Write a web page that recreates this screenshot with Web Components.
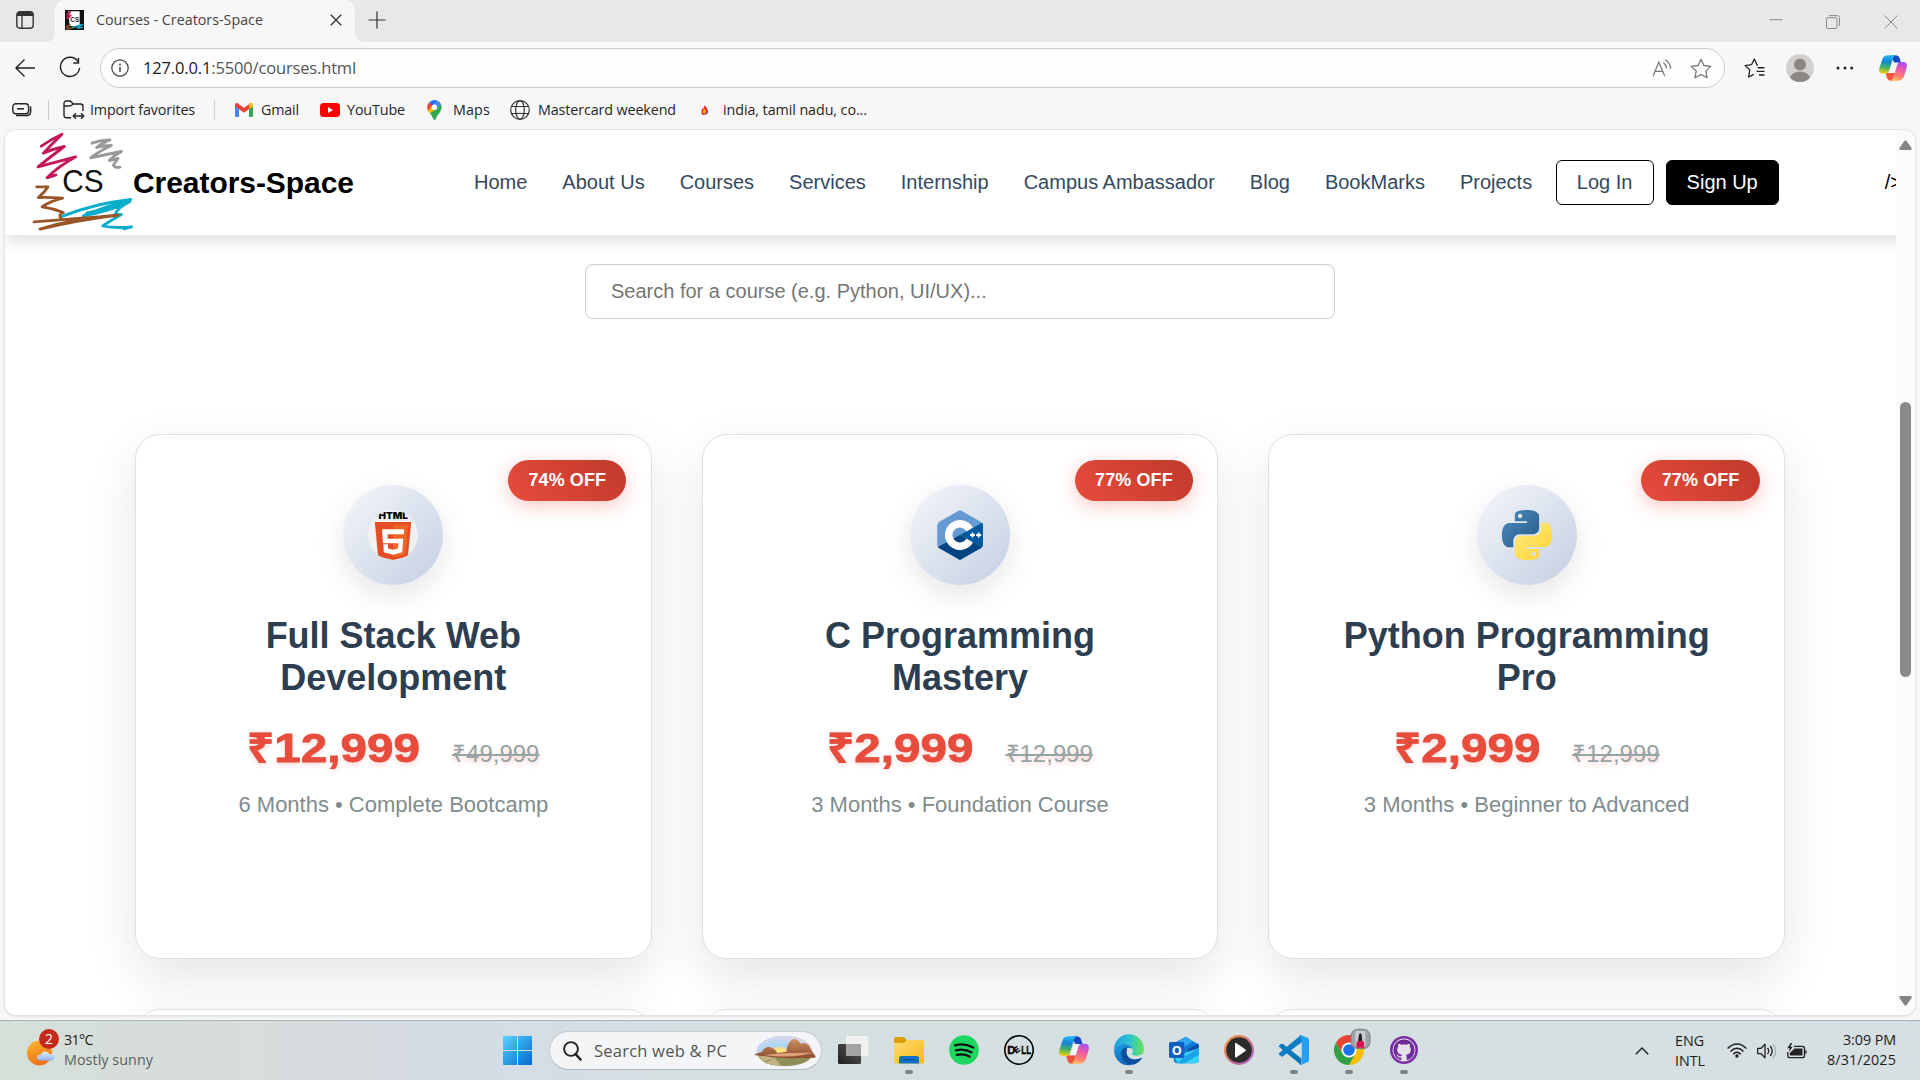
<!DOCTYPE html>
<html lang="en">
<head>
<meta charset="utf-8">
<title>Courses - Creators-Space</title>
<style>
html,body{margin:0;width:1920px;height:1080px;overflow:hidden;background:#f7f7f7}
body{font-family:"Open Sans","Noto Sans",sans-serif}
</style>
</head>
<body>
<desktop-screen></desktop-screen>
<script>
const ICONS = {
tabs:[18,18,'0 0 18 18','<rect x=".8" y=".8" width="16.4" height="16.4" rx="3" fill="none" stroke="#333" stroke-width="1.4"/><path d="M1 5V3.500Q1 1 3.500 1h11Q17 1 17 3.500V5z" fill="#333"/><path d="M6 5v12" stroke="#333" stroke-width="1.3"/>'],
close:[12,12,'0 0 12 12','<path d="M.8.8l10.400 10.400M11.200.8L.8 11.200" stroke="#333" stroke-width="1.300"/>'],
plus:[18,18,'0 0 18 18','<path d="M9 .5v17M.5 9h17" stroke="#333" stroke-width="1.200"/>'],
back:[20,18,'0 0 20 18','<path d="M20 9H1M9.500.6L1 9l8.500 8.400" fill="none" stroke="#222" stroke-width="1.400"/>'],
reload:[22,22,'0 0 22 22','<path d="M19 4.500A9.600 9.600 0 1 0 20.600 11M19.500.8v5.200h-5.300" fill="none" stroke="#222" stroke-width="1.400"/>'],
info:[18,18,'0 0 18 18','<circle cx="9" cy="9" r="8.200" fill="none" stroke="#444" stroke-width="1.200"/><path d="M9 8v5" stroke="#444" stroke-width="1.500"/><circle cx="9" cy="5.500" r="1" fill="#444"/>'],
min:[14,2,'0 0 14 2','<path d="M.5 .7h13" stroke="#8a8a8a"/>'],
max:[14,14,'0 0 14 14','<rect x=".5" y="2.700" width="10.500" height="10.800" rx="1" fill="none" stroke="#8a8a8a"/><path d="M3 .6h8.500q2 0 2 2V11" fill="none" stroke="#8a8a8a"/>'],
wclose:[14,14,'0 0 14 14','<path d="M.5.5l13 13M13.500.5l-13 13" stroke="#8a8a8a"/>'],
read:[20,18,'0 0 20 18','<path d="M1 17.300L6.800 3l6 14.300M3 12.300h7.800" fill="none" stroke="#777" stroke-width="1.200"/><path d="M11.500 3.700q2.800 2 3 5.500M13 .8q5.400 3.200 5.600 8.900" fill="none" stroke="#777" stroke-width="1.300"/>'],
star:[22,21,'0 0 22 21','<path d="M11 1.300l2.900 6.200 6.900.9-5 4.700 1.300 6.700L11 16.500l-6.100 3.300 1.300-6.700-5-4.700 6.900-.9z" fill="none" stroke="#777" stroke-width="1.300" stroke-linejoin="round"/>'],
favs:[22,21,'0 0 22 21','<path d="M14 7.200l-1-.2L10.300 1 7.500 6.700l-6.400.9 4.700 4.400-1.200 7 5.200-2.700" fill="none" stroke="#222" stroke-width="1.300" stroke-linejoin="round"/><path d="M13.500 9.800h7M12.500 13.400h8M15 17h5.500" stroke="#222" stroke-width="1.400"/>'],
user:[28,28,'0 0 28 28','<circle cx="14" cy="14" r="14" fill="#d3d1cf"/><circle cx="14" cy="10.600" r="6" fill="#8b8783"/><path d="M3.900 23.500Q6.500 17.500 14 17.500t10.100 6Q20 28 14 28T3.900 23.500z" fill="#8b8783"/>'],
more:[18,4,'0 0 18 4','<circle cx="2" cy="2" r="1.500" fill="#222"/><circle cx="9" cy="2" r="1.500" fill="#222"/><circle cx="15.700" cy="2" r="1.500" fill="#222"/>'],
copilot:[30,28,'0 0 90 84','<defs><linearGradient id="a" x1=".5" y1="0" x2=".4" y2="1"><stop offset="0" stop-color="#22b8f0"/><stop offset=".35" stop-color="#1585d8"/><stop offset=".65" stop-color="#3fb06a"/><stop offset="1" stop-color="#f2d010"/></linearGradient><linearGradient id="b" x1=".7" y1="0" x2=".4" y2="1"><stop offset="0" stop-color="#a54ff0"/><stop offset=".4" stop-color="#ee5aa8"/><stop offset=".75" stop-color="#fb7f72"/><stop offset="1" stop-color="#ffbb66"/></linearGradient></defs><path d="M42 1h11q10 0 14 11l4 13H50l-8-12z" fill="#1547c4"/><path d="M21 58h30L46 83h-8Q28 83 25 72z" fill="#f0553c"/><path d="M27 1h28Q47 2 43 17L33 50Q30 60 21 60H12Q-3 59 1 43L10 15Q14 2 27 1z" fill="url(#a)"/><path d="M63 83H36Q45 79 48 67l10-34q3-10 12-10h8q15 1 11 18L81 68Q76 82 63 83z" fill="url(#b)"/><path d="M46 25h17q-5 2-7 10l-7 23H32z" fill="#f4f4f4"/>'],
side:[20,14,'0 0 20 14','<rect x=".8" y=".8" width="15.800" height="10" rx="3" fill="none" stroke="#222" stroke-width="1.400"/><path d="M5 5.800h7" stroke="#222" stroke-width="1.500"/><path d="M18.600 3.500v5q0 4-4 4H4" fill="none" stroke="#222" stroke-width="1.500"/>'],
folder:[22,20,'0 0 22 20','<path d="M8 17.800H3.500Q1 17.800 1 15.300V3.500Q1 1 3.500 1h3.800l3 3h7.200Q20 4 20 6.500V11M1 6h5.500q1 0 2-.8L10.300 4" fill="none" stroke="#222" stroke-width="1.400"/><path d="M10.500 16h10M13 13.200L10.200 16l2.800 2.800M18 13.200l2.800 2.800-2.800 2.800" fill="none" stroke="#222" stroke-width="1.300"/>'],
gmail:[18,14,'0 0 18 14','<path d="M0 2v10.500Q0 14 1.300 14H4V4z" fill="#4285f4"/><path d="M18 2v10.500Q18 14 16.700 14H14V4z" fill="#34a853"/><path d="M14 .8V6l4-2.800V2q0-2.800-2.800-1.800z" fill="#fbbc04"/><path d="M0 2q0-3 2.800-1.700L9 5l6.200-4.700L14 6 9 9.800 4 6 0 3.200z" fill="#ea4335"/><path d="M14 1.200L15.200.3Q18-.7 18 2v1.200L14 6z" fill="#fbbc04"/>'],
yt:[20,14,'0 0 20 14','<rect width="20" height="14" rx="3.500" fill="#f00"/><path d="M8 4l5 3-5 3z" fill="#fff"/>'],
maps:[15,20,'0 0 15 20','<path d="M7.500 0A7.200 7.200 0 0 0 2 2.500l3 3.300L10.300.8Q9 0 7.500 0z" fill="#1a73e8"/><path d="M2 2.500Q.3 4.500.3 7.500q0 2 .7 3.600L6 5.500z" fill="#ea4335"/><path d="M10 .6Q13 1.600 14.200 4.500L6 14 2.500 13Q1.500 12 1 11.100z" fill="#fbbc04"/><path d="M9.500.4Q13 1.500 14.200 4.500L9.500 9.500 5 5.800z" fill="#4285f4"/><path d="M14.200 4.500q1.300 4-1.200 7.400Q9.500 16 8.600 19.200q-.4.800-1.100.8t-1.100-.8Q5.600 16.500 3 13.500z" fill="#34a853"/><circle cx="7.500" cy="7.300" r="2.700" fill="#fff"/>'],
globe:[20,20,'0 0 20 20','<g fill="none" stroke="#333" stroke-width="1.200"><circle cx="10" cy="10" r="9.300"/><ellipse cx="10" cy="10" rx="4.300" ry="9.300"/><path d="M1.500 6.500h17M1.500 13.500h17"/></g>'],
flame:[7,10,'0 0 8 11','<path d="M4 0q4 4 4 7T4 11 .5 7Q.6 4.500 2 3q.3 1 1 1.500Q3 2 4 0z" fill="#ee2c3c"/><path d="M4 4q2 2.500 1.500 4T3.700 9.500Q1 8 2.500 6z" fill="#ffb300"/><path d="M7 6q1.500 2.500-.5 4.200L4.500 11z" fill="#7a3cb0"/>'],
logo:[100,100,'99 399.500 300 300','<g fill="none" stroke-width="8.500" stroke-linecap="round" stroke-linejoin="round"><path stroke="#c2185b" d="M124 439Q155 417 186 403 Q158 430 130 460 Q160 447 193 440 Q150 472 114 501 Q170 486 227 471 Q175 500 141 534 L168 525"/><path stroke="#999" d="M276 430Q304 420 330 420Q304 430 290 443Q312 437 334 437Q296 455 272 474Q318 464 364 455Q338 470 328 482L354 476Q344 490 340 496Q346 505 360 502"/><path stroke="#9a5526" d="M110 561H144Q134 578 115 593Q148 592 188 595Q155 602 126 621Q158 625 190 638Q172 646 184 655"/><path stroke="#09aecb" d="M188 649Q280 612 392 599Q320 618 250 648Q330 634 390 605Q350 625 345 645L364 644Q330 664 308 678Q345 686 395 681L372 687M260 640Q330 622 385 606"/><path stroke="#9a5526" d="M102 666Q240 656 354 646Q230 662 120 688Q220 656 350 647"/></g><text x="187" y="577" font-family="Liberation Sans" font-size="94" textLength="124" lengthAdjust="spacingAndGlyphs" fill="#111">CS</text>'],
fav:[19,20,'0 0 57 60','<rect width="57" height="60" fill="#111"/><path d="M10 4l34 0v44H14z" fill="#fff"/><path d="M4 14L17 4 7 22l12-7-11 12" stroke="#c2185b" stroke-width="4" fill="none"/><path d="M2 52l14-8-10 14 30-8" stroke="#8d4f28" stroke-width="4" fill="none"/><path d="M20 52l34-9-18 11 18-1" stroke="#09aecb" stroke-width="4" fill="none"/><text x="16" y="35" font-size="19" font-weight="700" font-family="Liberation Sans" fill="#222">CS</text>'],
html:[50,50,'0 0 50 50','<circle cx="25" cy="25" r="25" fill="#f1f1f1"/><text x="10.500" y="8.800" font-family="Inter" font-weight="900" font-size="9.500" textLength="29.500" lengthAdjust="spacingAndGlyphs" fill="#000">HTML</text><path d="M6.800 12h36.400l-3.300 34.500L25 50l-14.900-3.500z" fill="#e44d26"/><path d="M25 14.800h15.200l-2.900 29.400L25 47.300z" fill="#f16529"/><path d="M14 19.200h22.200l-.5 5H19.500l.3 4.500h15.500l-1.100 13.500L25 44.800l-9.200-2.600-.5-8h4.500l.3 4.200 4.900 1.400 4.900-1.400.5-5.200H15z" fill="#fff"/>'],
cpp:[50,50,'0 0 50 50','<path d="M25 0l20.600 11.700q2.400 1.300 2.400 4v18.600q0 2.700-2.400 4L25 50 4.400 38.300q-2.200-1.300-2.200-4V15.700q0-2.700 2.200-4z" fill="#659ad2"/><path d="M47.300 12.800Q48 14 48 15.700v18.600q0 1.500-.8 2.700L25 25z" fill="#00599c"/><path d="M25 25l22.200 12q-.6.800-1.600 1.300L25 50 4.400 38.300Q3.400 37.700 2.900 37z" fill="#004482"/><path d="M38 17.600A15 15 0 1 0 38 32.400L31.500 28.600a7.500 7.500 0 1 1 0-7.200z" fill="#fff"/><path d="M37.500 22.500v5M35 25h5M43.700 22.500v5M41.200 25h5" stroke="#fff" stroke-width="1.800"/>'],
python:[50,50,'0 0 24 24','<defs><linearGradient id="p" x1="0" y1="0" x2=".8" y2=".8"><stop stop-color="#4b8bbe"/><stop offset="1" stop-color="#2f6391"/></linearGradient><linearGradient id="q" x1=".8" y1=".8" x2="0" y2="0"><stop stop-color="#ffe873"/><stop offset="1" stop-color="#ffd030"/></linearGradient></defs>'+['fill="url(#p)"','transform="rotate(180 12 12)" fill="url(#q)"'].map(a=>'<path '+a+' d="M14.250.18l.9.2.73.26.59.3.45.32.34.34.25.34.16.33.1.3.04.26.02.2-.01.13V8.500l-.05.63-.13.55-.21.46-.26.38-.3.31-.33.25-.35.19-.35.14-.33.1-.3.07-.26.04-.21.02H8.770l-.69.05-.59.14-.5.22-.41.27-.33.32-.27.35-.2.36-.15.37-.1.35-.07.32-.04.27-.02.21v3.060H3.170l-.21-.03-.28-.07-.32-.12-.35-.18-.36-.26-.36-.36-.35-.46-.32-.59-.28-.73-.21-.88-.14-1.050-.05-1.230.06-1.220.16-1.040.24-.87.32-.71.36-.57.4-.44.42-.33.42-.24.4-.16.36-.1.32-.05.24-.01h.16l.06.01h8.160v-.83H6.180l-.01-2.750-.02-.37.05-.34.11-.31.17-.28.25-.26.31-.23.38-.2.44-.18.51-.15.58-.12.64-.1.71-.06.77-.04.84-.02 1.270.05zm-6.300 1.980l-.23.33-.08.41.08.41.23.34.33.22.41.09.41-.09.33-.22.23-.34.08-.41-.08-.41-.23-.33-.33-.22-.41-.09-.41.09z"/>').join('')],
sun:[29,34,'0 0 29 34','<defs><linearGradient id="w" x1=".2" y1="0" x2=".6" y2="1"><stop stop-color="#f9b52b"/><stop offset="1" stop-color="#ef6c1a"/></linearGradient><linearGradient id="cl" x1="0" y1="0" x2="0" y2="1"><stop stop-color="#e6effc"/><stop offset="1" stop-color="#8db2ea"/></linearGradient></defs><circle cx="12.500" cy="21" r="12.500" fill="url(#w)"/><path d="M14 28.500q-4 0-4-3t4-3q1-3 4-3t4.500 2.500q5.200-.5 5.200 3t-4 3.500z" fill="url(#cl)"/>'],
win:[29,29,'0 0 29 29','<defs><linearGradient id="n" x1="0" y1="0" x2="1" y2="1"><stop stop-color="#5ad4fc"/><stop offset="1" stop-color="#0067d0"/></linearGradient></defs><path d="M0 1q0-1 1-1h13v14H0zM15 0h13q1 0 1 1v13H15zM0 15h14v14H1q-1 0-1-1zM15 15h14v13q0 1-1 1H15z" fill="url(#n)"/>'],
mag:[19,20,'0 0 19 20','<circle cx="8" cy="8" r="6.900" fill="none" stroke="#222" stroke-width="1.900"/><path d="M12.500 13l5 5.500" stroke="#222" stroke-width="2.600" stroke-linecap="round"/>'],
scene:[62,32,'0 0 186 96','<defs><radialGradient id="sky" cx=".4" cy=".55" r=".55"><stop stop-color="#fff07a"/><stop offset=".25" stop-color="#ffdc80"/><stop offset=".4" stop-color="#a5d8f4"/><stop offset="1" stop-color="#ddd5ec"/></radialGradient><linearGradient id="mt" x1="0" y1="0" x2="0" y2="1"><stop stop-color="#cf9060"/><stop offset="1" stop-color="#8c4b30"/></linearGradient></defs><ellipse cx="92" cy="48" rx="84" ry="46" fill="url(#sky)"/><path d="M12 64h162q-18 29-82 29T12 64z" fill="#8f8e57"/><path d="M0 60q10-8 24-9 6-15 22-15 16 3 24 18l27-4q4-34 23-38 14 2 20 14 20-7 28 12l12 20q6 4 4 10l-84 2Q50 67 0 60z" fill="url(#mt)"/><path d="M30 60q60-8 148-7l-36 8q-50 8-112-1z" fill="#dda279"/><path d="M30 64l32 4-34 13-14-17zM62 68l20 25-50-8z" fill="#c3b183"/>'],
task:[31,30,'0 0 31 30','<defs><linearGradient id="t" x1="0" y1="1" x2="1" y2="0"><stop stop-color="#222"/><stop offset="1" stop-color="#555"/></linearGradient></defs><rect y="9" width="23" height="20" rx="1.500" fill="url(#t)"/><rect x="8" y="1" width="22.500" height="20" rx="1.500" fill="#f3f3f3" opacity=".9"/><path d="M8 9h15v12H9.500Q8 21 8 19.500z" fill="#a3a3a3"/>'],
files:[30,27,'0 0 30 27','<defs><linearGradient id="f" x1="0" y1="0" x2="1" y2="1"><stop stop-color="#ffdc6e"/><stop offset="1" stop-color="#f8b71c"/></linearGradient></defs><path d="M0 1.500Q0 0 1.500 0H10l3 3.500V8H0z" fill="#dd9f0b"/><path d="M0 6h10l3-3h15.500Q30 3 30 4.500v21Q30 26.500 29 26.500H1q-1 0-1-1z" fill="url(#f)"/><path d="M5 26.500v-5Q5 19 7.500 19h15q2.500 0 2.500 2.500v5z" fill="#0c72c8"/><path d="M9 22.700h12" stroke="#064b8f"/>'],
spotify:[30,30,'0 0 30 30','<circle cx="15" cy="15" r="14.800" fill="#1ed760"/><path d="M6 10.300q9-2.600 18.300 2.200M7 15.300q8-2.200 15.500 2M7.800 19.900q6.700-1.700 12.800 1.700" fill="none" stroke="#111" stroke-width="2.300" stroke-linecap="round"/>'],
dell:[30,30,'0 0 30 30','<circle cx="15" cy="15" r="14.200" fill="none" stroke="#000" stroke-width="1.600"/><g font-family="Liberation Sans" font-weight="700" stroke="#000" stroke-width=".3"><text x="3.300" y="18.700" font-size="10.500" textLength="8" lengthAdjust="spacingAndGlyphs">D</text><text transform="translate(12.200 18.800) rotate(-38)" font-size="8.500">E</text><text x="17.300" y="18.700" font-size="10.500" textLength="10" lengthAdjust="spacingAndGlyphs">LL</text></g>'],
edge:[30,30,'0 0 90 90','<defs><linearGradient id="e1" x1="0" y1=".5" x2="1" y2=".5"><stop stop-color="#1b9de2"/><stop offset=".5" stop-color="#2bc3d2"/><stop offset="1" stop-color="#6be355"/></linearGradient><linearGradient id="e2" x1="0" y1="0" x2=".6" y2="1"><stop stop-color="#1ba0e2"/><stop offset="1" stop-color="#1363b8"/></linearGradient></defs><path d="M0 44A45 45 0 0 1 90 42q0 20-20 20-17 0-17-6 4-4 3-11Q52 26 30 26 8 28 0 44z" fill="url(#e1)"/><path d="M0 46Q6 28 30 26q20 1 25 15-18-8-28 6Q16 75 55 89 20 97 4 65 0 56 0 46z" fill="url(#e2)"/><path d="M37 36q-18 6-15 25 6 28 36 28 16-4 26-19-1-3-6-0-20 7-33-4-10-10-5-22z" fill="#0d4f9e"/><path d="M38 48q2-9 10-8 8 3 8 9-1 5-3 8 1 6 17 6 8 0 13-4l2 6-7 5q-20 6-32-2-9-8-8-20z" fill="#d7e0e1"/>'],
outlook:[30,28,'0 0 90 84','<path d="M14 22L50 2l40 24v44q0 12-12 12H26q-12 0-12-12z" fill="#1278cf"/><path d="M14 23L50 4l22 12-40 26z" fill="#31a6f0"/><path d="M58 40l30-18v14L48 62z" fill="#0a4aa8"/><path d="M14 60l34-10 42-14v34q0 12-12 12H26z" fill="#38d2f5"/><path d="M48 60L90 36v20L46 82H26z" fill="#1aa4ea"/><rect y="18" width="46" height="48" rx="5" fill="#0f5fc4"/><text x="8" y="56" font-family="Open Sans" font-weight="700" font-size="38" fill="#fff">O</text>'],
media:[30,30,'0 0 30 30','<defs><linearGradient id="m" x1="0" y1="0" x2="1" y2="1"><stop stop-color="#ff9a32"/><stop offset=".45" stop-color="#d97a78"/><stop offset="1" stop-color="#a65ae0"/></linearGradient></defs><circle cx="15" cy="15" r="15" fill="url(#m)"/><circle cx="15" cy="15" r="12.800" fill="#2b2b2b"/><path d="M11 8.500v13.400q.3 1 1.200.5l9.300-6.400q.8-.8 0-1.500L12.200 8q-1-.5-1.200.5z" fill="#fff"/>'],
vscode:[30,30,'0 0 90 90','<path d="M0 32l6-5q3-2 6 0l56 44-2 19L0 35z" fill="#0b77b8"/><path d="M0 58l6 6q3 2 6 0L70 20 66 0 0 55z" fill="#0e7ec4"/><path d="M66 0l21 9q3 2 3 5v62q0 4-3 5l-21 9q-3 1-6-2 8 2 8-5V8q0-7-8-5 3-4 6-3z" fill="#26a0f2"/><path d="M67 26v39L42 45z" fill="#d8e1e2"/>'],
chrome:[38,36,'0 0 114 108','<g transform="translate(0 18)"><path d="M6 22.500A45 45 0 0 1 84 22.500H45A22.500 22.500 0 0 0 25.500 56.250z" fill="#ea4335"/><path d="M84 22.500A45 45 0 0 1 45 90L64.500 56.250A22.500 22.500 0 0 0 45 22.500z" fill="#fbbc04"/><path d="M45 90A45 45 0 0 1 6 22.500L25.500 56.250A22.500 22.500 0 0 0 64.500 56.250z" fill="#34a046"/><circle cx="45" cy="45" r="22" fill="#fff"/><circle cx="45" cy="45" r="17.500" fill="#1a73e8"/></g><rect x="51" y="1" width="57" height="58" rx="20" fill="#9da3a5" stroke="#777e80" stroke-width="3"/><rect x="64" y="6" width="30" height="46" fill="#c5ced0"/><path d="M75 17q3-8 8 0l2 20H72z" fill="#222"/><path d="M68 38q10-6 22 0l1 18H67z" fill="#d4144c"/>'],
github:[28,28,'0 0 28 28','<circle cx="14" cy="14" r="14" fill="#7b2fa6"/><circle cx="14" cy="14" r="11.400" fill="#e6e2ec"/><path transform="translate(3.400 3.400) scale(1.325)" fill="#6d2c98" d="M8 0C3.580 0 0 3.580 0 8c0 3.540 2.290 6.530 5.470 7.590.4.07.55-.17.55-.38 0-.19-.01-.82-.01-1.490-2.010.37-2.530-.49-2.690-.94-.09-.23-.48-.94-.82-1.130-.28-.15-.68-.52-.01-.53.63-.01 1.080.58 1.230.82.72 1.210 1.870.87 2.330.66.07-.52.28-.87.51-1.070-1.780-.2-3.640-.89-3.640-3.950 0-.87.31-1.590.82-2.150-.08-.2-.36-1.020.08-2.120 0 0 .67-.21 2.200.82.64-.18 1.320-.27 2-.27s1.360.09 2 .27c1.530-1.040 2.200-.82 2.200-.82.44 1.100.16 1.920.08 2.120.51.56.82 1.270.82 2.150 0 3.070-1.870 3.750-3.650 3.950.29.25.54.73.54 1.480v2.200c0 .21.15.46.55.38A8 8 0 0 0 16 8c0-4.420-3.580-8-8-8z"/>'],
chev:[14,8,'0 0 14 8','<path d="M.8 7.200L7 1l6.200 6.200" fill="none" stroke="#222" stroke-width="1.500"/>'],
wifi:[20,15,'0 0 20 15','<g fill="none" stroke="#222" stroke-width="1.400"><path d="M.6 5.600Q5 1 10 1t9.400 4.600M3.500 8.500Q6.500 5.300 10 5.300t6.500 3.200M6.300 11.200Q8 9.300 10 9.300t3.700 1.900"/></g><circle cx="10" cy="13" r="1.700" fill="#222"/>'],
vol:[20,16,'0 0 20 16','<path d="M.7 5.300H4L8 1.200v13.600L4 10.700H.7z" fill="none" stroke="#222" stroke-width="1.300" stroke-linejoin="round"/><path d="M10.500 5q2.400 3 0 6M13.200 3q4 5 0 10" fill="none" stroke="#222" stroke-width="1.300"/><path d="M16 1q5.500 7 0 14" fill="none" stroke="#9aa" stroke-width="1.200"/>'],
bat:[20,16,'0 0 20 16','<path d="M7 3.300h8.300q2.200 0 2.200 2.200v7q0 2.200-2.200 2.200H3Q.8 14.700.8 12.500V9" fill="none" stroke="#222" stroke-width="1.300"/><path d="M7.500 5.500h7.300q.7 0 .7.700v5.600q0 .7-.7.700H3.500q-.7 0-.7-.7V10z" fill="#222"/><path d="M18.300 7v4q1.500-.3 1.500-2t-1.500-2z" fill="#222"/><path d="M3.600 0L.3 5.200h2.500L1.800 9l4-5.300H3.300L5.300 0z" fill="#222"/>'],
up:[13,10,'0 0 13 10','<path d="M5.600.8q.9-1 1.800 0L12.600 8q.5 1.800-1 2H1.400Q-.2 9.800.4 8z" fill="#858585"/>'],
down:[13,10,'0 0 13 10','<path d="M5.600 9.200q.9 1 1.800 0L12.600 2q.5-1.800-1-2H1.400Q-.2.2.4 2z" fill="#858585"/>']
};

class BaseEl extends HTMLElement{
  connectedCallback(){
    if(this.shadowRoot) return;
    const r=this.attachShadow({mode:'open'});
    r.innerHTML='<style>*{box-sizing:border-box}'+this.css()+'</style>'+this.html();
    this.ready&&this.ready(r);
  }
}

/* Inline vector icon, picked by name */
customElements.define('ui-icon',class extends BaseEl{
  css(){return ':host{display:block;flex:none}svg{display:block;overflow:visible}'}
  html(){const [w,h,v,b]=ICONS[this.getAttribute('name')];return `<svg width="${w}" height="${h}" viewBox="${v}">${b}</svg>`}
});

/* Single-line label spaced so that it fills the width given in "w" */
customElements.define('fit-text',class extends BaseEl{
  css(){return ':host{display:block;flex:none;white-space:nowrap;width:max-content}'}
  html(){return '<slot></slot>'}
  ready(){
    const w=+this.getAttribute('w'),n=this.textContent.length;
    if(w&&n) this.style.letterSpacing=((w-this.getBoundingClientRect().width)/n).toFixed(3)+'px';
  }
});

customElements.define('tab-strip',class extends BaseEl{
  css(){return `:host{display:flex;height:42px;background:#f7f7f7;font-size:14.300px;color:#444}
  .left{width:55px;background:#e8e8e8;border-radius:0 0 9px 0;display:flex;align-items:center;padding:0 0 2px 16px}
  .tab{width:300px;display:flex;align-items:center;padding:0 13px 2px 10px;background:#f7f7f7;border-radius:10px 10px 0 0}
  .cell{background:#e8e8e8;display:flex}
  .tab fit-text{margin-left:12px;margin-right:auto;line-height:40px}
  .rest{flex:1;background:#e8e8e8;border-radius:0 0 0 9px;display:flex;align-items:center;padding:0 22px 2px 13px}
  .gap{flex:1}.m{margin-right:43px}.x{margin-right:44px}.win{padding-top:3px}`}
  html(){return `<div class="left"><ui-icon name="tabs"></ui-icon></div><div class="cell"><div class="tab"><ui-icon name="fav"></ui-icon><fit-text w="167">Courses - Creators-Space</fit-text><ui-icon name="close"></ui-icon></div></div><div class="rest"><ui-icon name="plus"></ui-icon><span class="gap"></span><ui-icon class="m" name="min"></ui-icon><ui-icon class="x win" name="max"></ui-icon><ui-icon class="win" name="wclose"></ui-icon></div>`}
});

customElements.define('address-row',class extends BaseEl{
  css(){return `:host{display:flex;align-items:center;height:52px;padding:0 12px 0 15px;color:#555;font-size:16.500px}
  .rl{margin-left:24px}
  .bar{margin-left:19px;width:1625px;height:40px;border:1px solid #ccc;border-radius:20px;background:#fdfdfd;display:flex;align-items:center;padding:0 12px 0 10px}
  .bar fit-text{margin-left:14px;margin-right:auto;padding-bottom:1px}
  b{font-weight:400;color:#1c1c1c}.s{margin-left:18px}
  .f{margin-left:19px}.u{margin-left:20px}.mo{margin-left:22px}.c{margin-left:auto;transform:scale(.93)}`}
  html(){return `<ui-icon name="back"></ui-icon><ui-icon class="rl" name="reload"></ui-icon><div class="bar"><ui-icon name="info"></ui-icon><fit-text w="213"><b>127.0.0.1</b>:5500/courses.html</fit-text><ui-icon name="read"></ui-icon><ui-icon class="s" name="star"></ui-icon></div><ui-icon class="f" name="favs"></ui-icon><ui-icon class="u" name="user"></ui-icon><ui-icon class="mo" name="more"></ui-icon><ui-icon class="c" name="copilot"></ui-icon>`}
});

customElements.define('bookmark-item',class extends BaseEl{
  css(){return `:host{display:flex;align-items:center;flex:none}`}
  html(){return `<ui-icon name="${this.getAttribute('icon')}"></ui-icon><fit-text w="${this.getAttribute('w')}" style="margin-left:${this.getAttribute('gap')}px">${this.getAttribute('label')}</fit-text>`}
});
customElements.define('bookmark-bar',class extends BaseEl{
  css(){return `:host{display:flex;align-items:center;height:32px;padding-left:12px;color:#262626;font-size:14.300px;line-height:20px}
  i{width:1px;height:20px;background:#ccc}`}
  html(){return `<ui-icon name="side"></ui-icon><i style="margin:0 14px 0 16px"></i><bookmark-item icon="folder" gap="5" w="105" label="Import favorites"></bookmark-item><i style="margin:0 20px 0 19px"></i><bookmark-item icon="gmail" gap="8" w="38" label="Gmail"></bookmark-item><bookmark-item style="margin-left:21px" icon="yt" gap="7" w="58" label="YouTube"></bookmark-item><bookmark-item style="margin-left:22px" icon="maps" gap="11" w="37" label="Maps"></bookmark-item><bookmark-item style="margin-left:20px" icon="globe" gap="8" w="138" label="Mastercard weekend"></bookmark-item><bookmark-item style="margin-left:25px" icon="flame" gap="15" w="144" label="india, tamil nadu, co..."></bookmark-item>`}
});

customElements.define('site-nav',class extends BaseEl{
  css(){return `:host{display:flex;align-items:center;height:105px;padding-left:28px;background:#fff;box-shadow:0 4px 16px rgba(0,0,0,.15);position:relative;z-index:2;font:20px/23px "Liberation Sans",sans-serif;color:#34495e;white-space:nowrap}
  .brand{font-size:30px;font-weight:700;line-height:34px;color:#000;width:222px;letter-spacing:-.06px;padding-top:1px}
  nav{display:flex;gap:35px;margin-left:119px}
  .btn{height:45px;border:1px solid #000;border-radius:6px;display:flex;align-items:center;justify-content:center;padding-bottom:1px}
  .in{width:98px;margin-left:23.500px}.up{width:113px;margin-left:12px;background:#000;color:#fff}
  .end{margin-left:106px;color:#000}nav,.end{padding-bottom:1px}`}
  html(){return `<ui-icon name="logo"></ui-icon><span class="brand">Creators-Space</span><nav>${['Home','About Us','Courses','Services','Internship','Campus Ambassador','Blog','BookMarks','Projects'].map(t=>`<span>${t}</span>`).join('')}</nav><span class="btn in">Log In</span><span class="btn up">Sign Up</span><span class="end">/&gt;</span>`}
});

/* Heavy wide price: bold digits widened horizontally, box grown to match */
customElements.define('wide-price',class extends BaseEl{
  css(){return `:host{display:block}span{display:inline-block;transform:scaleX(1.19);transform-origin:0 50%;-webkit-text-stroke:.8px #e74c3c;white-space:nowrap}`}
  html(){return '<span><slot></slot></span>'}
  ready(r){const s=r.querySelector('span');s.style.marginRight=(s.offsetWidth*.19)+'px'}
});

customElements.define('course-card',class extends BaseEl{
  css(){return `:host{display:flex;flex-direction:column;align-items:center;position:relative;height:525px;border:1px solid #e0e0e0;border-radius:25px;background:#fff;box-shadow:0 18.750px 50px rgba(0,0,0,.1);padding:50px 50px 0;text-align:center;font-family:"Liberation Sans",sans-serif}
  .off{position:absolute;top:25px;right:24.200px;width:118.400px;height:41px;line-height:41px;border-radius:21px;color:#fff;font-size:18px;font-weight:700;letter-spacing:.1px;background:linear-gradient(45deg,#e74c3c,#c0392b);box-shadow:0 5px 19px rgba(231,76,60,.3)}
  .disc{width:100px;height:100px;border-radius:50%;background:linear-gradient(135deg,#f5f7fa,#c3cfe2);box-shadow:0 10px 31px rgba(0,0,0,.1);display:flex;align-items:center;justify-content:center;flex:none}
  ui-icon{border-radius:50%}:host(.html) .disc ui-icon{overflow:hidden}
  h3{margin:30px 0 0;font-size:36px;line-height:42px;font-weight:700;color:#2c3e50;height:84px}
  .price{margin-top:26px;height:46px;display:flex;align-items:baseline;font-size:40px;line-height:46px;font-weight:700;color:#e74c3c;text-shadow:0 2.500px 5px rgba(231,76,60,.2)}
  s{font-size:24px;font-weight:400;color:#95a5a6;margin-left:32px;text-decoration-thickness:2px}
  p{margin:21px 0 0;font-size:22px;line-height:26px;color:#7f8c8d}`}
  html(){const g=n=>this.getAttribute(n)||'';if(!g('title1'))return '';
  return `<span class="off">${g('off')}</span><div class="disc"><ui-icon name="${g('icon')}"></ui-icon></div><h3>${g('title1')}<br>${g('title2')}</h3><div class="price"><wide-price>${g('price')}</wide-price><s>${g('old')}</s></div><p>${g('info')}</p>`}
});

customElements.define('page-scrollbar',class extends BaseEl{
  css(){return `:host{display:flex;flex-direction:column;align-items:center;width:19px;background:#fbfbfb;padding:10px 0 9px;flex:none}
  i{width:11px;height:275px;border-radius:6px;background:#8a8a8a;margin-top:252px;margin-bottom:auto}`}
  html(){return '<ui-icon name="up"></ui-icon><i></i><ui-icon name="down"></ui-icon>'}
});

customElements.define('courses-page',class extends BaseEl{
  css(){return `:host{display:flex;width:1910px;height:885px;margin:4px 0 0 5px;border-radius:11px;background:#fff;overflow:hidden;flex:none}
  .view{width:1891px;overflow:hidden;flex:none}
  .doc{width:1910px}
  .search{width:750px;height:55px;margin:29px auto 0;border:1px solid #ccc;border-radius:8px;padding:0 25px;font:20px/53px "Liberation Sans",sans-serif;color:#757575;background:#fff}
  .grid{width:1650px;margin:115px auto 0;display:grid;grid-template-columns:repeat(3,1fr);gap:50px}`}
  html(){const c=(i,o,a,b,p,d,n)=>`<course-card icon="${i}" class="${i}" off="${o}" title1="${a}" title2="${b}" price="${p}" old="${d}" info="${n}"></course-card>`;
  return `<div class="view"><div class="doc"><site-nav></site-nav><div class="search">Search for a course (e.g. Python, UI/UX)...</div><div class="grid">
  ${c('html','74% OFF','Full Stack Web','Development','₹12,999','₹49,999','6 Months • Complete Bootcamp')}
  ${c('cpp','77% OFF','C Programming','Mastery','₹2,999','₹12,999','3 Months • Foundation Course')}
  ${c('python','77% OFF','Python Programming','Pro','₹2,999','₹12,999','3 Months • Beginner to Advanced')}
  <course-card></course-card><course-card></course-card><course-card></course-card></div></div></div><page-scrollbar></page-scrollbar>`}
});

customElements.define('task-app',class extends BaseEl{
  css(){return `:host{display:flex;align-items:center;justify-content:center;width:55px;height:59px;position:relative;flex:none}
  :host([open])::after{content:"";position:absolute;left:23.500px;top:49px;width:8px;height:4px;border-radius:2px;background:#7d8485}
  .chrome{margin:-6px 0 0 8px}`}
  html(){const n=this.getAttribute('name');return `<ui-icon class="${n}" name="${n}"></ui-icon>`}
});

customElements.define('task-bar',class extends BaseEl{
  css(){return `:host{display:flex;align-items:center;height:60px;border-top:1px solid #a8b1b1;background:linear-gradient(90deg,#d5e0d9 0,#d7ddda 160px,#d9dcde 300px,#d4dce6 480px,#d5dde4 560px,#d6dfe0 760px,#d6dfe1);color:#1c1c1c;font-size:14.300px;line-height:20px;flex:none}
  .sun{position:relative;margin-left:27px;margin-top:-4px}
  .n{position:absolute;left:12px;top:-3px;width:20px;height:20px;border-radius:50%;background:#c42b1c;color:#fff;text-align:center;font-size:14px;line-height:20px}
  .wt{margin:-2px 0 0 8px;width:93px}.wt fit-text+fit-text{color:#5a605e}
  .start{margin-left:346px}
  .pill{margin-left:17px;width:273px;height:39px;border-radius:20px;background:#f3f5f7;border:1px solid #c5ccd2;border-bottom-color:#b0b6bb;display:flex;align-items:center;padding:0 5px 0 13px;font-size:16.500px;color:#555}
  .pill fit-text{margin-left:12px;margin-right:auto}
  .apps{display:flex;margin:-1px 0 0 4px}
  .tray{margin-left:auto;display:flex;align-items:center}
  .lang{margin-left:26px;width:30px}.r{margin:-1px 24px 0 20px;display:flex;flex-direction:column;align-items:flex-end}
  .wi{margin-left:22px}.v{margin-left:10px}.b{margin-left:10px}`}
  html(){const apps=['task','files*','spotify','dell','copilot','edge*','outlook','media','vscode*','chrome*','github*'];
  return `<div class="sun"><ui-icon name="sun"></ui-icon><span class="n">2</span></div><div class="wt"><fit-text w="29">31°C</fit-text><fit-text w="89">Mostly sunny</fit-text></div><ui-icon class="start" name="win"></ui-icon><div class="pill"><ui-icon name="mag"></ui-icon><fit-text w="133">Search web &amp; PC</fit-text><ui-icon name="scene"></ui-icon></div><div class="apps">${apps.map(a=>`<task-app name="${a.replace('*','')}"${a.endsWith('*')?' open':''}></task-app>`).join('')}</div><div class="tray"><ui-icon name="chev"></ui-icon><div class="lang"><fit-text w="29">ENG</fit-text><fit-text w="30">INTL</fit-text></div><ui-icon class="wi" name="wifi"></ui-icon><ui-icon class="v" name="vol"></ui-icon><ui-icon class="b" name="bat"></ui-icon><div class="r"><fit-text w="53">3:09 PM</fit-text><fit-text w="69">8/31/2025</fit-text></div></div>`}
});

customElements.define('desktop-screen',class extends BaseEl{
  css(){return `:host{display:flex;flex-direction:column;width:1920px;height:1080px;background:#f7f7f7;overflow:hidden}
  courses-page{box-shadow:0 0 0 1px #e4e4e4,0 1px 3px rgba(0,0,0,.15)}task-bar{margin-top:auto}`}
  html(){return '<tab-strip></tab-strip><address-row></address-row><bookmark-bar></bookmark-bar><courses-page></courses-page><task-bar></task-bar>'}
});
</script>
</body>
</html>
